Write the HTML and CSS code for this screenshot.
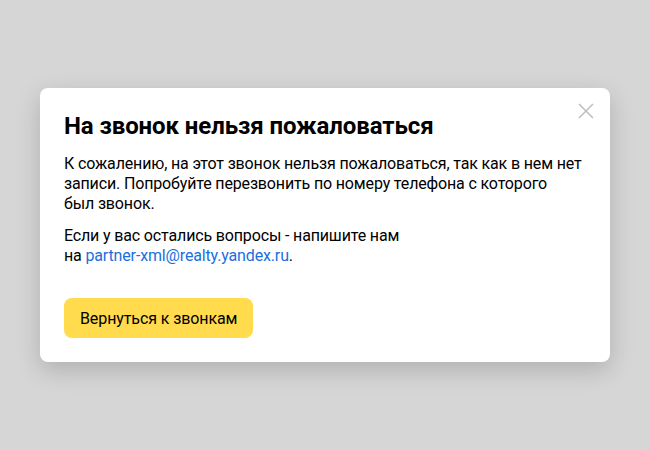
FILE: index.html
```html
<!DOCTYPE html>
<html lang="ru">
<head>
<meta charset="utf-8">
<link rel="stylesheet" href="styles.css">
</head>
<body>
<div class="overlay">
  <div class="modal">
    <button class="close" aria-label="Закрыть">
      <svg width="16" height="16" viewBox="0 0 16 16"><path d="M1 1L15 15M15 1L1 15" stroke="#bdbdbd" stroke-width="1.5" fill="none"/></svg>
    </button>
    <h1 class="title">На звонок нельзя пожаловаться</h1>
    <p class="text">К сожалению, на этот звонок нельзя пожаловаться, так как в нем нет записи. Попробуйте перезвонить по номеру телефона с которого был&nbsp;звонок.</p>
    <p class="text">Если у вас остались вопросы - напишите нам<br>на <a class="link" href="#">partner-xml@realty.yandex.ru</a>.</p>
    <button class="btn">Вернуться к звонкам</button>
  </div>
</div>
</body>
</html>
```
FILE: styles.css
```css
html, body {
  margin: 0;
  padding: 0;
  height: 100%;
}
body {
  background: #d6d6d6;
  font-family: "Roboto", "Inter", sans-serif;
  color: #000;
}
.overlay {
  height: 100%;
  display: flex;
  align-items: flex-start;
  justify-content: center;
  padding-top: 88px;
  box-sizing: border-box;
}
.modal {
  position: relative;
  width: 570px;
  box-sizing: border-box;
  background: #fff;
  border-radius: 8px;
  padding: 22px 24px 24px 24px;
  box-shadow: 0 8px 24px rgba(0,0,0,0.18);
}
.close {
  position: absolute;
  top: 15px;
  right: 16px;
  width: 16px;
  height: 16px;
  padding: 0;
  border: 0;
  background: none;
  display: block;
}
.close svg { display: block; }
.title {
  margin: 0 0 12px;
  font-size: 24px;
  line-height: 32px;
  font-weight: 700;
  letter-spacing: -0.1px;
}
.text {
  margin: 0 0 12px;
  font-size: 16px;
  line-height: 20px;
  letter-spacing: -0.15px;
}
.link {
  color: #1a6fe0;
  text-decoration: none;
}
.btn {
  margin-top: 20px;
  height: 40px;
  padding: 0 16px;
  border: 0;
  border-radius: 8px;
  background: #ffdb4d;
  font-family: inherit;
  font-size: 16px;
  letter-spacing: -0.1px;
  color: #000;
}
```
